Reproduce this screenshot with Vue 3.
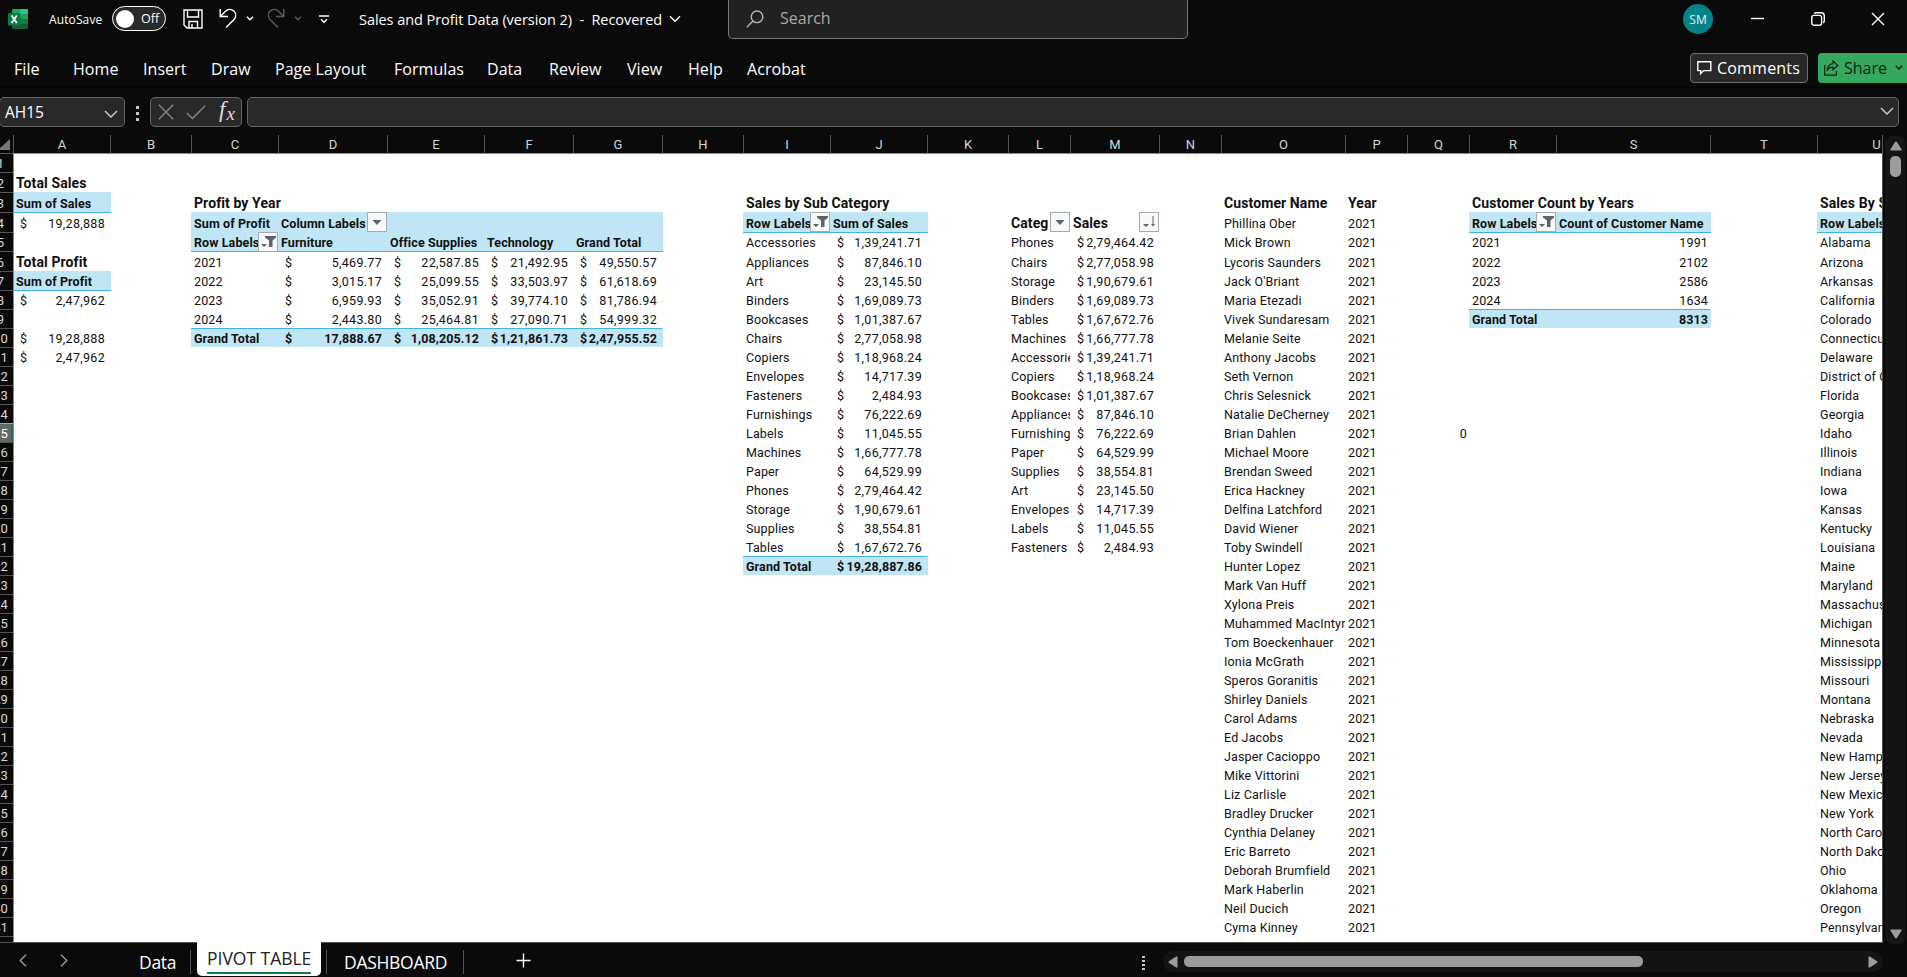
<script setup>
const menus = ['File', 'Home', 'Insert', 'Draw', 'Page Layout', 'Formulas', 'Data', 'Review', 'View', 'Help', 'Acrobat']
const letters = 'ABCDEFGHIJKLMNOPQRSTU'.split('')
const colWidths = [97, 81, 87, 109, 97, 89, 89, 81, 87, 97, 81, 62, 89, 62, 124, 62, 62, 87, 154, 107, 118]
const rowHeights = Array.from({ length: 41 }, (_, i) => ([1, 2, 3, 5].includes(i) ? 20 : 19))
const columns = colWidths.map((w) => w + 'px').join(' ')
const rows = rowHeights.map((h) => h + 'px').join(' ')

const cells = []
const put = (ref, text, kind = '', extra = {}) => {
  const [, letter, row] = ref.match(/([A-Z])(\d+)/)
  cells.push({ col: letters.indexOf(letter) + 1, row: +row, text, kind, ...extra })
}
const list = (letter, start, items, kind = '') => items.forEach((t, i) => put(letter + (start + i), t, kind))

put('A2', 'Total Sales', 'title')
put('A3', 'Sum of Sales', 'head under')
put('A4', '19,28,888', 'money')
put('A6', 'Total Profit', 'title')
put('A7', 'Sum of Profit', 'head under')
put('A8', '2,47,962', 'money')
put('A10', '19,28,888', 'money')
put('A11', '2,47,962', 'money')

put('C3', 'Profit by Year', 'title')
put('C4', 'Sum of Profit', 'head')
put('D4', 'Column Labels', 'head', { button: 'menu' })
'EFG'.split('').forEach((c) => put(c + 4, '', 'head'))
put('C5', 'Row Labels', 'head under', { button: 'filter' })
;['Furniture', 'Office Supplies', 'Technology', 'Grand Total'].forEach((t, i) => put('DEFG'[i] + 5, t, 'head under'))
list('C', 6, ['2021', '2022', '2023', '2024'])
list('D', 6, ['5,469.77', '3,015.17', '6,959.93', '2,443.80'], 'money')
list('E', 6, ['22,587.85', '25,099.55', '35,052.91', '25,464.81'], 'money')
list('F', 6, ['21,492.95', '33,503.97', '39,774.10', '27,090.71'], 'money')
list('G', 6, ['49,550.57', '61,618.69', '81,786.94', '54,999.32'], 'money')
put('C10', 'Grand Total', 'head over')
;['17,888.67', '1,08,205.12', '1,21,861.73', '2,47,955.52'].forEach((t, i) => put('DEFG'[i] + 10, t, 'head over money'))

put('I3', 'Sales by Sub Category', 'title')
put('I4', 'Row Labels', 'head under', { button: 'filter' })
put('J4', 'Sum of Sales', 'head under')
list('I', 5, ['Accessories', 'Appliances', 'Art', 'Binders', 'Bookcases', 'Chairs', 'Copiers', 'Envelopes', 'Fasteners',
  'Furnishings', 'Labels', 'Machines', 'Paper', 'Phones', 'Storage', 'Supplies', 'Tables'])
list('J', 5, ['1,39,241.71', '87,846.10', '23,145.50', '1,69,089.73', '1,01,387.67', '2,77,058.98', '1,18,968.24',
  '14,717.39', '2,484.93', '76,222.69', '11,045.55', '1,66,777.78', '64,529.99', '2,79,464.42', '1,90,679.61',
  '38,554.81', '1,67,672.76'], 'money')
put('I22', 'Grand Total', 'head over')
put('J22', '19,28,887.86', 'head over money')

put('L4', 'Categ', 'title clip', { button: 'menu' })
put('M4', 'Sales', 'title', { button: 'sort' })
list('L', 5, ['Phones', 'Chairs', 'Storage', 'Binders', 'Tables', 'Machines', 'Accessories', 'Copiers', 'Bookcases',
  'Appliances', 'Furnishings', 'Paper', 'Supplies', 'Art', 'Envelopes', 'Labels', 'Fasteners'], 'clip')
list('M', 5, ['2,79,464.42', '2,77,058.98', '1,90,679.61', '1,69,089.73', '1,67,672.76', '1,66,777.78', '1,39,241.71',
  '1,18,968.24', '1,01,387.67', '87,846.10', '76,222.69', '64,529.99', '38,554.81', '23,145.50', '14,717.39',
  '11,045.55', '2,484.93'], 'money')

const customers = ['Phillina Ober', 'Mick Brown', 'Lycoris Saunders', "Jack O'Briant", 'Maria Etezadi', 'Vivek Sundaresam',
  'Melanie Seite', 'Anthony Jacobs', 'Seth Vernon', 'Chris Selesnick', 'Natalie DeCherney', 'Brian Dahlen',
  'Michael Moore', 'Brendan Sweed', 'Erica Hackney', 'Delfina Latchford', 'David Wiener', 'Toby Swindell',
  'Hunter Lopez', 'Mark Van Huff', 'Xylona Preis', 'Muhammed MacIntyre', 'Tom Boeckenhauer', 'Ionia McGrath',
  'Speros Goranitis', 'Shirley Daniels', 'Carol Adams', 'Ed Jacobs', 'Jasper Cacioppo', 'Mike Vittorini',
  'Liz Carlisle', 'Bradley Drucker', 'Cynthia Delaney', 'Eric Barreto', 'Deborah Brumfield', 'Mark Haberlin',
  'Neil Ducich', 'Cyma Kinney']
put('O3', 'Customer Name', 'title')
put('P3', 'Year', 'title')
list('O', 4, customers, 'clip')
list('P', 4, customers.map(() => '2021'))
put('Q15', '0', 'number')

put('R3', 'Customer Count by Years', 'title')
put('R4', 'Row Labels', 'head under', { button: 'filter' })
put('S4', 'Count of Customer Name', 'head under')
list('R', 5, ['2021', '2022', '2023', '2024'])
list('S', 5, ['1991', '2102', '2586', '1634'], 'number')
put('R9', 'Grand Total', 'head over')
put('S9', '8313', 'head over number')

put('U3', 'Sales By States', 'title')
put('U4', 'Row Labels', 'head under')
list('U', 5, ['Alabama', 'Arizona', 'Arkansas', 'California', 'Colorado', 'Connecticut', 'Delaware',
  'District of Columbia', 'Florida', 'Georgia', 'Idaho', 'Illinois', 'Indiana', 'Iowa', 'Kansas', 'Kentucky',
  'Louisiana', 'Maine', 'Maryland', 'Massachusetts', 'Michigan', 'Minnesota', 'Mississippi', 'Missouri', 'Montana',
  'Nebraska', 'Nevada', 'New Hampshire', 'New Jersey', 'New Mexico', 'New York', 'North Carolina', 'North Dakota',
  'Ohio', 'Oklahoma', 'Oregon', 'Pennsylvania'])
</script>

<template>
  <div class="window">
    <header class="titlebar">
      <svg class="logo" viewBox="0 0 20 20">
        <path d="M5 0H12V5H4V1Q4 0 5 0Z" fill="#21a366" />
        <path d="M12 0H19Q20 0 20 1V5H12Z" fill="#33c481" />
        <path d="M4 5H12V10H4Z" fill="#107c41" />
        <path d="M12 5H20V10H12Z" fill="#21a366" />
        <path d="M4 10H12V15H4Z" fill="#185c37" />
        <path d="M12 10H20V15H12Z" fill="#107c41" />
        <path d="M4 15H20V19Q20 20 19 20H5Q4 20 4 19Z" fill="#185c37" />
        <rect y="4" width="12.5" height="12.5" rx="1" fill="#107c41" />
        <path d="M3.6 6.5L8.8 14M8.8 6.5L3.6 14" stroke="#fff" stroke-width="1.8" />
      </svg>
      <span class="autosave">AutoSave</span>
      <span class="toggle"><i></i><b>Off</b></span>
      <svg class="save" viewBox="0 0 20 20"><path d="M1 1H19V19H4L1 16ZM4.5 1V8H15.5V1M6 19V12.5H14.5V19M9 19V15" /></svg>
      <svg class="undo" viewBox="0 0 18 21"><path d="M1.2 1V8.5H9M1.5 8.2L6.5 3.3C9 .8 12.5.8 15 3.2C17.3 5.5 17.3 9 15 11.4L7 19.6" /></svg>
      <svg class="mini" viewBox="0 0 8 5"><path d="M1 .8L4 3.8L7 .8" /></svg>
      <svg class="undo dim redo" viewBox="0 0 18 21"><path d="M16.8 1V8.5H9M16.5 8.2L11.5 3.3C9 .8 5.5.8 3 3.2C.7 5.5.7 9 3 11.4L11 19.6" /></svg>
      <svg class="mini dim" viewBox="0 0 8 5"><path d="M1 .8L4 3.8L7 .8" /></svg>
      <svg class="customize" viewBox="0 0 10 9"><path d="M0 1H10M2 4.2L5 7.2L8 4.2" /></svg>
      <span class="doc">Sales and Profit Data (version 2)&nbsp; -&nbsp; Recovered</span>
      <svg class="doc-chevron" viewBox="0 0 12 8"><path d="M1 1.2L6 6.2L11 1.2" /></svg>
      <div class="search">
        <svg viewBox="0 0 18 18"><circle cx="11" cy="6.8" r="5.8" /><path d="M7 11L.8 17.3" /></svg>
        <span>Search</span>
      </div>
      <span class="avatar">SM</span>
      <svg class="minimize" viewBox="0 0 14 14"><path d="M0 6.5H13" /></svg>
      <svg class="restore" viewBox="0 0 14 14"><rect x=".8" y="3.4" width="9.8" height="9.8" rx="2" /><path d="M3.2 1.6Q4 .7 5.4.7H10Q13.3.7 13.3 4V8.6Q13.3 10.2 12.3 11" /></svg>
      <svg class="close" viewBox="0 0 14 14"><path d="M1 1L13 13M13 1L1 13" /></svg>
    </header>

    <div class="menurow">
      <nav class="menus"><span v-for="m in menus" :key="m">{{ m }}</span></nav>
      <button class="comments">
        <svg viewBox="0 0 15 14"><path d="M.8.8H13.8V9.6H6.6L3.6 12.6V9.6H.8Z" /></svg>Comments
      </button>
      <button class="share">
        <svg viewBox="0 0 15 16"><path d="M.7 5V15.2H12.3V11M9 1L13.8 5.4L9 9.6V7.2Q5 7 3.2 10.8Q3.6 4 9 3.6Z" /></svg>Share
        <svg class="share-chevron" viewBox="0 0 8 5"><path d="M.8.8L4 4L7.2.8" /></svg>
      </button>
    </div>

    <div class="formulabar">
      <div class="namebox">AH15<svg viewBox="0 0 14 8"><path d="M1 1L7 7L13 1" /></svg></div>
      <div class="dots"><i></i><i></i><i></i></div>
      <div class="fxbox">
        <svg class="cancel" viewBox="0 0 16 16"><path d="M.8.8L15.2 15.2M15.2.8L.8 15.2" /></svg>
        <svg class="accept" viewBox="0 0 20 15"><path d="M.8 8L6.4 13.6L19.2.8" /></svg>
        <span class="fx"><em>f</em><em class="x">x</em></span>
      </div>
      <div class="formula"><svg viewBox="0 0 14 8"><path d="M1 1L7 7L13 1" /></svg></div>
    </div>

    <div class="workspace">
      <div class="sheet">
        <div class="colheads">
          <div class="corner"><svg viewBox="0 0 10 11"><path d="M10 0V11H0V9Z" /></svg></div>
          <div v-for="(l, i) in letters" :key="l" class="colhead" :style="{ width: colWidths[i] + 'px' }">{{ l }}</div>
        </div>
        <div class="body">
          <div class="rowheads">
            <div v-for="(h, i) in rowHeights" :key="i" class="rowhead" :class="{ active: i === 14 }" :style="{ height: h + 'px' }"><span>{{ i + 1 }}</span></div>
            <div class="rowhead"></div>
          </div>
          <div class="grid" :style="{ gridTemplateColumns: columns, gridTemplateRows: rows }">
            <div v-for="(c, i) in cells" :key="i" class="cell" :class="c.kind" :style="{ gridColumn: c.col, gridRow: c.row }">
              <span v-if="c.kind.includes('money')">$</span>
              <span>{{ c.text }}</span>
              <svg v-if="c.button" class="filterbtn" viewBox="0 0 20 20">
                <rect class="face" x=".5" y=".5" width="19" height="19" />
                <path v-if="c.button === 'menu'" d="M5.5 8H14.5L10 13Z" />
                <path v-if="c.button === 'filter'" d="M7 4H18V5.5L14.5 8.5V15H11V8.5L7 5.5ZM3 12H9L6 15Z" />
                <path v-if="c.button === 'sort'" d="M4 12H10L7 15ZM13.5 4H14.5V12H16L14 14.5L12 12H13.5Z" />
              </svg>
            </div>
          </div>
        </div>
      </div>
      <div class="vscroll">
        <svg viewBox="0 0 12 10"><path d="M6 .5Q6.5.5 7 1.2L11.5 8.2Q12 9.5 11 9.5H1Q0 9.5.5 8.2L5 1.2Q5.5.5 6 .5Z" /></svg>
        <i></i>
        <svg class="down" viewBox="0 0 12 10"><path d="M6 9.5Q6.5 9.5 7 8.8L11.5 1.8Q12 .5 11 .5H1Q0 .5.5 1.8L5 8.8Q5.5 9.5 6 9.5Z" /></svg>
      </div>
    </div>

    <footer class="tabs">
      <svg class="prev" viewBox="0 0 8 13"><path d="M7 .8L1.2 6.5L7 12.2" /></svg>
      <svg class="next" viewBox="0 0 8 13"><path d="M1 .8L6.8 6.5L1 12.2" /></svg>
      <span class="tab data">Data</span>
      <span class="tab current"><b>PIVOT TABLE</b></span>
      <span class="tab dash">DASHBOARD</span>
      <svg class="add" viewBox="0 0 15 15"><path d="M7.5 .5V14.5M.5 7.5H14.5" /></svg>
      <div class="dots tabdots"><i></i><i></i><i></i><i></i></div>
      <div class="hscroll">
        <svg viewBox="0 0 10 12"><path d="M.5 6Q.5 5.5 1.2 5L8.2.5Q9.5 0 9.5 1V11Q9.5 12 8.2 11.5L1.2 7Q.5 6.5.5 6Z" /></svg>
        <i></i>
        <svg class="right" viewBox="0 0 10 12"><path d="M9.5 6Q9.5 5.5 8.8 5L1.8.5Q.5 0 .5 1V11Q.5 12 1.8 11.5L8.8 7Q9.5 6.5 9.5 6Z" /></svg>
      </div>
    </footer>
  </div>
</template>

<style>
body { background: #0a0a0a; overflow: hidden; }
</style>

<style scoped>
* { box-sizing: border-box; }
.window { width: 1907px; height: 977px; overflow: hidden; background: #0a0a0a; color: #fff; font-family: "Open Sans", "Noto Sans", sans-serif; display: flex; flex-direction: column; }
svg { flex: none; fill: none; stroke: #fff; stroke-width: 1.4; display: block; }
.dim { stroke: #5c5c5c; }

.titlebar { height: 40px; flex: none; display: flex; align-items: flex-start; white-space: nowrap; }
.titlebar > * { flex: none; }
.logo { width: 20px; height: 20px; margin: 9px 0 0 8px; stroke: none; }
.autosave { width: 53px; margin: 10px 0 0 21px; font-size: 12px; line-height: 19px; letter-spacing: .12px; }
.toggle { width: 54px; height: 25px; margin: 6px 0 0 10px; border: 1px solid #fff; border-radius: 13px; background: #292929; display: flex; align-items: center; padding-left: 3px; }
.toggle i { width: 18px; height: 18px; border-radius: 50%; background: #fff; }
.toggle b { margin-left: 7px; font-weight: 400; font-size: 12.5px; }
.save { width: 20px; height: 20px; margin: 9px 0 0 17px; }
.undo { width: 18px; height: 21px; margin: 8px 0 0 16px; }
.redo { margin-left: 13px; }
.mini { width: 8px; height: 5px; margin: 16px 0 0 9px; }
.customize { width: 10px; height: 9px; margin: 15px 0 0 17px; }
.doc { width: 303px; margin: 9px 0 0 30px; font-size: 14.5px; line-height: 21px; letter-spacing: -.05px; }
.doc-chevron { width: 12px; height: 8px; margin: 15px 0 0 7px; }
.search { width: 460px; height: 39px; margin-left: 47px; border: 1px solid #777; border-top: 0; border-radius: 0 0 5px 5px; background: #212121; display: flex; padding: 10px 0 0 17px; }
.search svg { width: 18px; height: 18px; stroke: #b4b4b4; }
.search span { margin: -3px 0 0 16px; font-size: 16px; line-height: 22px; color: #a8a8a8; }
.avatar { width: 30px; height: 30px; margin: 4px 0 0 495px; border-radius: 50%; background: #038387; font-size: 12px; line-height: 31px; text-align: center; color: #e6f3f3; }
.minimize, .restore, .close { width: 14px; height: 14px; margin-top: 12px; }
.minimize { margin-left: 38px; }
.restore { margin-left: 46px; }
.close { margin-left: 46px; }

.menurow { height: 48px; flex: none; display: flex; align-items: flex-start; border-bottom: 2px solid #050505; }
.menus { width: 1690px; flex: none; display: grid; grid-template-columns: 59px 70px 68px 64px 119px 93px 62px 78px 61px 59px 80px; padding: 18px 0 0 14px; font-size: 16px; line-height: 22px; letter-spacing: .05px; white-space: nowrap; }
.comments, .share { flex: none; height: 30px; margin-top: 13px; border-radius: 4px; font: 16px/26px "Open Sans", sans-serif; letter-spacing: .2px; display: flex; align-items: center; white-space: nowrap; }
.comments { width: 118px; padding: 0 0 1px 6px; border: 1px solid #707070; background: #292929; color: #fff; }
.comments svg { width: 15px; height: 14px; margin-right: 5px; }
.share { width: 100px; margin-left: 10px; padding: 0 0 1px 6px; border: 0; background: #36a75f; color: #0a2314; letter-spacing: 0; }
.share svg { width: 15px; height: 16px; margin-right: 5px; stroke: #0a2314; stroke-width: 1.2; }
.share .share-chevron { width: 8px; height: 5px; margin-left: 8px; stroke-width: 1.5; }

.formulabar { height: 47px; flex: none; display: flex; padding-top: 9px; }
.namebox, .fxbox, .formula { height: 30px; border: 1px solid #666; border-radius: 5px; background: #292929; display: flex; align-items: center; }
.namebox { width: 126px; margin-left: -1px; padding-left: 5px; font-size: 15.5px; justify-content: space-between; padding-right: 6px; }
.namebox svg, .formula svg { width: 14px; height: 8px; stroke: #d0d0d0; }
.namebox svg { margin-top: 3px; }
.formula svg { margin-top: -2px; }
.dots { display: flex; flex-direction: column; gap: 3px; }
.dots i { width: 3px; height: 3px; background: #c8c8c8; }
.formulabar .dots { margin: 9px 0 0 11px; width: 14px; }
.fxbox { width: 92px; padding-left: 7px; }
.cancel { width: 16px; height: 16px; stroke: #858585; }
.accept { width: 20px; height: 15px; margin-left: 12px; stroke: #858585; }
.fx { margin-left: 13px; font: 23px/24px "Liberation Serif", serif; color: #ddd; padding-bottom: 3px; letter-spacing: -1px; }
.fx .x { font-size: 19px; position: relative; top: 3px; margin-left: 2px; }
.formula { width: 1652px; margin-left: 5px; justify-content: flex-end; padding-right: 4px; }

.workspace { height: 808px; flex: none; display: flex; }
.sheet { width: 1883px; height: 808px; overflow: hidden; border-right: 1px solid #555; border-bottom: 1px solid #555; font-family: Roboto, "Liberation Sans", sans-serif; font-size: 12.5px; }
.colheads { position: relative; z-index: 1; display: flex; width: 2010px; height: 18px; box-shadow: 0 1px 0 #8a8a8a; }
.corner { width: 13px; }
.corner svg { width: 10px; height: 11px; margin-top: 4px; fill: #777; stroke: none; }
.colhead { flex: none; border-left: 1px solid #555; text-align: center; line-height: 19px; font-size: 13px; color: #d6d6d6; }
.body { display: flex; width: 2010px; height: 790px; }
.rowheads { position: relative; z-index: 1; width: 14px; margin-right: -1px; height: 790px; flex: none; background: #0a0a0a; border-right: 1px solid #8a8a8a; overflow: hidden; }
.rowhead { width: 25px; min-height: 19px; margin-left: -12px; border-top: 1px solid #555; display: flex; justify-content: center; align-items: flex-end; line-height: 17px; font-size: 13px; color: #d6d6d6; }
.rowhead.active { background: #666; color: #fff; border-top-color: #aaa; box-shadow: inset -2px 0 0 #107c41, 0 1px 0 #aaa; }
.grid { height: 790px; width: 1997px; flex: none; display: grid; align-content: start; background: #fff; color: #101010; letter-spacing: .15px; }
.cell { position: relative; min-width: 0; display: flex; align-items: flex-end; padding: 0 3px; line-height: 16px; white-space: nowrap; }
.clip { overflow: hidden; }
.money { justify-content: space-between; padding: 0 5px 0 7px; letter-spacing: .3px; }
.number { justify-content: flex-end; padding-right: 2px; }
.title { font-size: 14px; font-weight: 700; letter-spacing: .1px; padding-bottom: 1px; }
.head { background: #c0e6f5; font-weight: 700; letter-spacing: .1px; box-shadow: 1px 0 0 #c0e6f5; }
.under { box-shadow: 1px 0 0 #c0e6f5, 0 1px 0 #44b3e1, 1px 1px 0 #44b3e1; }
.over { box-shadow: inset 0 1px 0 #44b3e1, 1px 0 0 #c0e6f5; }
.filterbtn { position: absolute; right: 0; top: 0; width: 20px; height: 20px; fill: #5e6266; stroke: none; }
.face { fill: #f7f8fa; stroke: #a5abb3; stroke-width: 1; }

.vscroll { width: 21px; height: 810px; margin-left: 2px; border-radius: 10px; background: #141414; display: flex; flex-direction: column; align-items: center; padding: 6px 0; }
.vscroll svg { width: 12px; height: 10px; fill: #9c9c9c; stroke: none; }
.vscroll i { width: 11px; height: 21px; margin-top: 5px; border-radius: 5px; background: #9c9c9c; }
.vscroll .down { margin-top: auto; }

.tabs { height: 34px; flex: none; display: flex; align-items: flex-start; font-size: 17.5px; white-space: nowrap; }
.tabs > * { flex: none; }
.prev, .next { width: 8px; height: 13px; margin-top: 11px; stroke: #9a9a9a; }
.prev { margin-left: 19px; }
.next { margin-left: 33px; }
.tab { height: 24px; margin-top: 7px; border-right: 1px solid #555; line-height: 24px; letter-spacing: -.3px; }
.data { width: 123px; padding-left: 71px; }
.current { width: 124px; height: 34px; margin: -1px 0 0 6px; padding: 4px 10px 0; background: #fff; color: #222; border: 0; border-radius: 0 0 5px 5px; position: relative; }
.current b { display: block; height: 28px; font-weight: 400; line-height: 25px; border-bottom: 2px solid #107c41; letter-spacing: -.02px; }
.dash { width: 138px; margin-left: 5px; padding-left: 17px; border-left: 1px solid #555; }
.add { width: 15px; height: 15px; margin: 10px 0 0 52px; }
.tabdots { margin: 13px 0 0 611px; width: 3px; gap: 2px; }
.tabdots i { height: 2px; }
.hscroll { width: 720px; height: 21px; margin: 8px 0 0 18px; border-radius: 10px; background: #141414; display: flex; align-items: center; padding: 0 5px; }
.hscroll svg { width: 10px; height: 12px; fill: #9c9c9c; stroke: none; }
.hscroll i { width: 459px; height: 11px; margin-left: 6px; border-radius: 5px; background: #9c9c9c; }
.hscroll .right { margin-left: auto; }
</style>
